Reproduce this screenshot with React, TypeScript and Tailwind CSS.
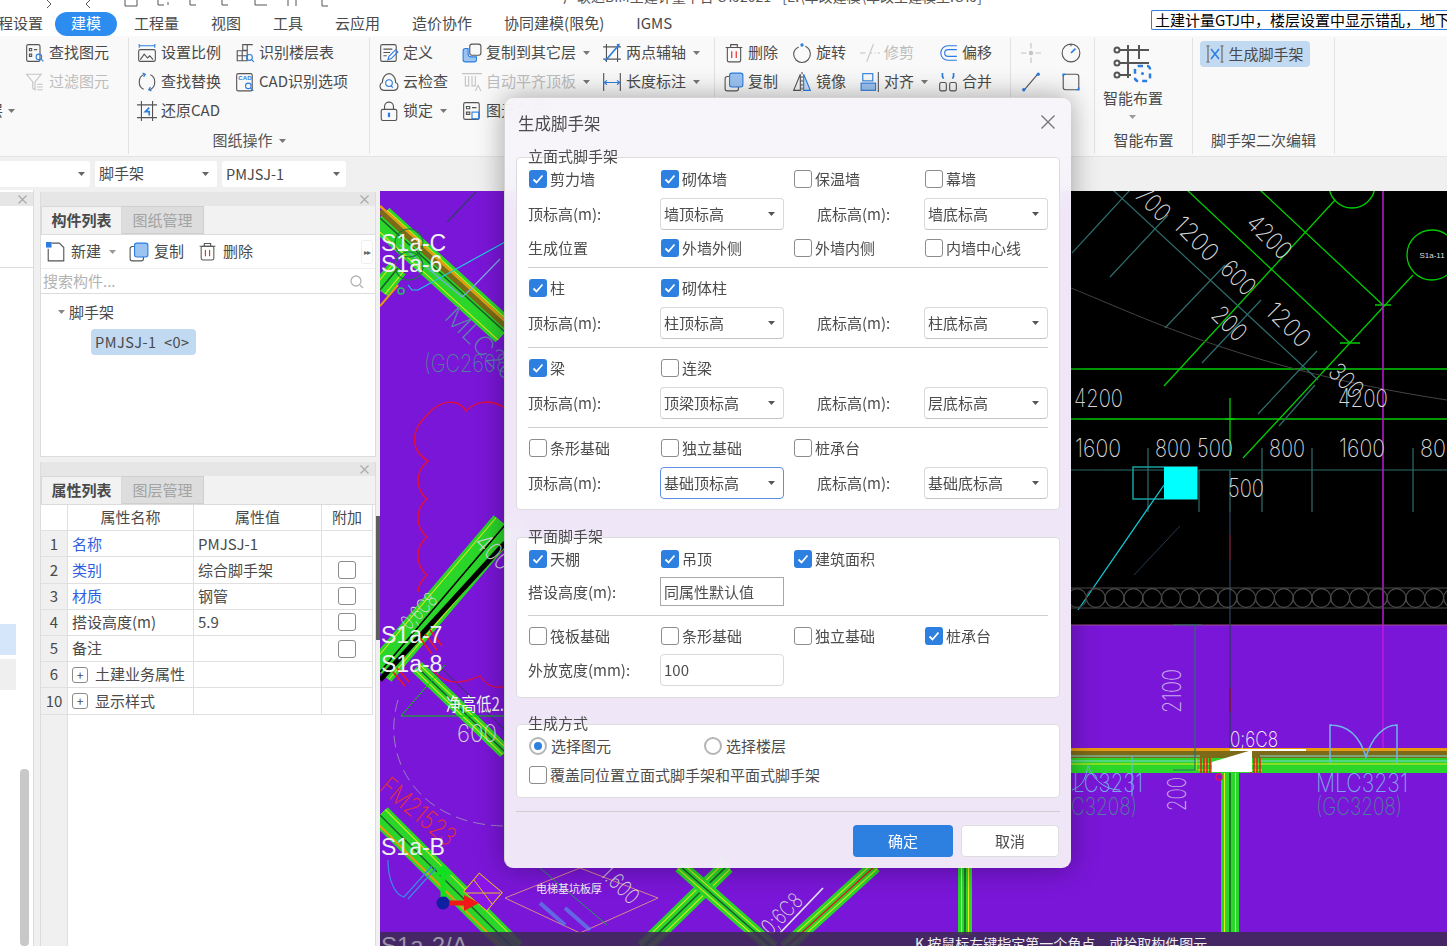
import { ReactNode } from 'react';

const font = '"Noto Sans CJK SC", "Noto Sans", sans-serif';

// ---- ribbon icons, all on an 18px box ----
const G = '#555555';
const B = '#2b7de0';
const L = '#c4c4c4';

function Ico({ children, size = 20 }: { children: ReactNode; size?: number }) {
  return (
    <svg width={size} height={size} viewBox="0 0 18 18" fill="none" stroke={G} strokeWidth="1" className="shrink-0">
      {children}
    </svg>
  );
}

const icons: Record<string, ReactNode> = {
  find: (
    <>
      <rect x="1.500" y="1.500" width="12" height="15" rx="1.500" />
      <path d="M4 5h2v2H4zM8 6h3M4 10h2v2H4z" />
      <circle cx="12.500" cy="12.500" r="2.500" stroke={B} />
      <path d="M14.500 14.500l2 2" stroke={B} />
    </>
  ),
  filter: (
    <g stroke={L}>
      <path d="M1.500 2h13L9 9v7l-2-1.500V9z" />
      <path d="M11 11h5M11 13.500h5M11 16h5" />
    </g>
  ),
  scale: (
    <>
      <path d="M2 2.500h14M2 .8v3.400M16 .8v3.400" stroke={B} />
      <rect x="1.500" y="6" width="15" height="10.500" rx="1.500" />
      <path d="M3 15l3.500-5 3 3.500 2-2 3 3.500" />
    </>
  ),
  floor: (
    <>
      <path d="M7 1.500h4v5H7zM11 1.500h5M2 7h9v9H2zM2 11.500h9M6.500 7v9" />
      <circle cx="13" cy="13" r="2.600" stroke={B} />
      <path d="M15 15l2 2" stroke={B} />
    </>
  ),
  replace: (
    <>
      <path d="M7 2C3.500 3 2 6 2 9s1.500 5.500 4 6.500" />
      <path d="M11 16c3.500-1 5-4 5-7s-1.500-5.500-4-6.500" />
      <path d="M5 1l2.500 1-1.500 2.500M13 17l-2.500-1 1.500-2.500" stroke={B} />
    </>
  ),
  cad: (
    <>
      <rect x="1.500" y="1.500" width="14" height="15.500" rx="1.500" />
      <text x="3" y="7.500" fontSize="5.500" fill={B} stroke="none" fontFamily="Liberation Sans" fontWeight="700">
        CAD
      </text>
      <circle cx="12" cy="12.500" r="2.500" stroke={B} />
      <path d="M14 14.500l2.500 2.500" stroke={B} />
    </>
  ),
  restore: (
    <>
      <path d="M4 0v18M14 0v18M0 3.500h18M0 15h18" />
      <path d="M11 6L7.500 9.500H11V13" stroke={B} strokeWidth="1.500" />
    </>
  ),
  define: (
    <>
      <rect x="1.500" y="1.500" width="14" height="15" rx="1.500" />
      <path d="M4 5.500h8M4 8.500h6M4 11.500h3" />
      <path d="M8 15l1-3 6-6 2 2-6 6z" stroke={B} />
    </>
  ),
  cloud: (
    <>
      <path d="M5 16.500c-5 0-5-6-2-7 0-5 3-8 6-8s6 3 6 8c3 1 3 7-2 7z" />
      <circle cx="9" cy="10" r="3" stroke={B} />
      <path d="M11 12.500l1.500 1.500" stroke={B} />
    </>
  ),
  lock: (
    <>
      <rect x="2" y="7.500" width="14" height="10" rx="1.500" />
      <path d="M5 7.500V5a4 4 0 018 0v2.500" />
      <rect x="8" y="10.500" width="2" height="4" fill={B} stroke="none" />
    </>
  ),
  copyLayer: (
    <>
      <rect x="7" y="1" width="10" height="10" rx="2" />
      <path d="M5.500 5H3a2 2 0 00-2 2v8a2 2 0 002 2h8a2 2 0 002-2v-2.500H8a2.500 2.500 0 01-2.500-2.500z" fill="#9cc4f2" stroke={B} />
    </>
  ),
  sheet: (
    <>
      <rect x="1.500" y="1.500" width="14" height="15" rx="1.500" />
      <path d="M4 5h3v2H4zM9 6h4M4 10h3v2H4z" />
      <rect x="9" y="10" width="6" height="6" stroke={B} />
    </>
  ),
  autoAlign: (
    <g stroke={L}>
      <path d="M0 1.500h18M3 3.500v9h3v-9M9 3.500v9h3v-9" />
      <path d="M12 17l2.500-5 2.500 5" />
    </g>
  ),
  twoPoint: (
    <>
      <path d="M4 1v16M14 1v16M1 3.500h16M1 14.500h16" />
      <path d="M3 16L15 2" stroke={B} strokeWidth="1.500" />
      <path d="M13 1.500l3-1-.5 3.500z" fill={B} stroke="none" />
    </>
  ),
  dim: (
    <>
      <path d="M1.500 1v16M16.500 1v16" />
      <path d="M2 9.500h14M4.500 7.500l-2.500 2 2.500 2M13.500 7.500l2.500 2-2.500 2" stroke={B} />
    </>
  ),
  trash: (
    <>
      <path d="M1.500 4h15M6 4V1.500h6V4" />
      <rect x="3" y="4" width="12" height="13" rx="1.500" />
      <path d="M7 7.500v6M11 7.500v6" stroke="#e02020" />
    </>
  ),
  rotate: (
    <>
      <path d="M6 3.500C3 5 1.500 7.500 1.500 10a7.500 7.500 0 0015 0c0-3-1.500-5.500-4.500-7" />
      <circle cx="9" cy="1.800" r="1.500" fill={B} stroke="none" />
    </>
  ),
  trim: (
    <g stroke={L}>
      <path d="M6 17L12 1" />
      <path d="M0 9h5M9 9h2M13 9h1M16 9h2" />
    </g>
  ),
  offset: (
    <g stroke={B}>
      <path d="M17 2.500H9a6.500 6.500 0 000 13h8" />
      <path d="M17 6H9a3 3 0 000 6h8" />
    </g>
  ),
  copy: (
    <>
      <path d="M5 4H3a2 2 0 00-2 2v9a2 2 0 002 2h8a2 2 0 002-2v-1.500" />
      <rect x="5" y="1" width="12" height="12.500" rx="2" fill="#9cc4f2" stroke={B} />
    </>
  ),
  mirror: (
    <>
      <path d="M7.500 2L1.500 16.500h6z" />
      <path d="M10.500 2l6 14.500h-6z" fill="#c9dff8" stroke={B} />
      <path d="M9 0v18" strokeDasharray="2 1.500" />
    </>
  ),
  align: (
    <>
      <rect x="2.500" y="1.500" width="9" height="6.500" stroke={B} />
      <rect x="1" y="10" width="13" height="6.500" fill="#9cc4f2" stroke={B} />
      <path d="M16.500 0v18" />
    </>
  ),
  merge: (
    <>
      <rect x="1.500" y="9.500" width="6" height="7.500" rx="1.500" />
      <rect x="10.500" y="9.500" width="6" height="7.500" rx="1.500" />
      <path d="M4 1v3l1 2M14 1v3l-1 2" stroke={B} strokeWidth="1.500" />
    </>
  ),
  point: (
    <g stroke={L}>
      <path d="M9 0v5M9 13v5M0 9h5M13 9h5" />
      <circle cx="9" cy="9" r="1.500" fill={L} />
    </g>
  ),
  gauge: (
    <>
      <circle cx="9" cy="9" r="8" />
      <path d="M9 9l4-4" stroke={B} strokeWidth="1.500" />
      <path d="M9 1v2" />
    </>
  ),
  line: (
    <>
      <path d="M3 16L15 2" />
      <circle cx="2.500" cy="16" r="1.500" fill={B} stroke="none" />
      <circle cx="15.500" cy="2" r="1.500" fill={B} stroke="none" />
    </>
  ),
  box: (
    <>
      <rect x="2" y="2" width="14" height="14" rx="2" />
      <path d="M2 4V2h2M14 16h2v-2" stroke={B} strokeWidth="1.500" />
    </>
  ),
  scaffold: (
    <>
      <path d="M2 1v16M16 1v16M.5 1h3M.5 17h3M14.500 1h3M14.500 17h3" stroke="#7f7f7f" strokeWidth="1.500" />
      <path d="M5 4l8 10M13 4L5 14" stroke={B} strokeWidth="1.500" />
    </>
  ),
};

function Tool({ icon, label, off, drop }: { icon: string; label: string; off?: boolean; drop?: boolean }) {
  return (
    <div className={`flex items-center h-[29px] gap-[4px] whitespace-nowrap ${off ? 'text-[#bdbdbd]' : 'text-[#4a4a4a]'}`}>
      <Ico>{icons[icon]}</Ico>
      <span>{label}</span>
      {drop && <Tri className="ml-[3px]" />}
    </div>
  );
}

function Tri({ className = '', color = '#777' }: { className?: string; color?: string }) {
  return (
    <svg width="7" height="4" viewBox="0 0 7 4" className={`shrink-0 ${className}`}>
      <path d="M0 0h7L3.500 4z" fill={color} />
    </svg>
  );
}

function Check({ on, label }: { on?: boolean; label?: string }) {
  return (
    <div className="flex items-center h-[20px] gap-[3px] pl-[1px] whitespace-nowrap">
      {on ? (
        <span className="w-[18px] h-[18px] rounded-[3px] bg-[#2d7fe0] flex items-center justify-center shrink-0">
          <svg width="14" height="14" viewBox="0 0 14 14" fill="none" stroke="#fff" strokeWidth="1.800">
            <path d="M2.500 7.500l3 3 6-7" />
          </svg>
        </span>
      ) : (
        <span className="w-[18px] h-[18px] rounded-[3px] bg-white border border-[#8c8c8c] shrink-0" />
      )}
      {label && <span>{label}</span>}
    </div>
  );
}

function Select({ value, focus }: { value: string; focus?: boolean }) {
  return (
    <div
      className={`w-[124px] h-[32px] bg-white rounded-[4px] border flex items-center justify-between pl-[3px] pr-[8px] ${
        focus ? 'border-[#5d8fe6]' : 'border-[#d9d9d9] border-b-[#c4c4c4]'
      }`}
    >
      <span>{value}</span>
      <Tri color="#555" />
    </div>
  );
}

const dialogCols = 'grid grid-cols-[132px_133px_131px_124px] items-center';

function CheckRow({ items, className = '' }: { items: ([string, boolean] | null)[]; className?: string }) {
  return (
    <div className={`${dialogCols} ${className}`}>
      {items.map((it, i) => (it ? <Check key={i} label={it[0]} on={it[1]} /> : <span key={i} />))}
    </div>
  );
}

function LevelRow({ top, bottom, focus }: { top: string; bottom: string; focus?: boolean }) {
  return (
    <div className={`${dialogCols} mt-[9px]`}>
      <span>顶标高(m):</span>
      <Select value={top} focus={focus} />
      <span className="pl-[24px]">底标高(m):</span>
      <Select value={bottom} />
    </div>
  );
}

function GroupBox({ title, className, children }: { title: string; className: string; children: ReactNode }) {
  return (
    <div className={`relative bg-white rounded-[4px] border border-[#dcdcdc] px-[11px] pt-[11px] ${className}`}>
      <span className="absolute left-[11px] -top-[12px] leading-[20px]">{title}</span>
      {children}
    </div>
  );
}

function Rule({ className = '' }: { className?: string }) {
  return <div className={`h-px bg-[#cfcfcf] ${className}`} />;
}

function Radio({ on, label, className = '' }: { on?: boolean; label: string; className?: string }) {
  return (
    <div className={`flex items-center gap-[4px] ${className}`}>
      <span className="w-[18px] h-[18px] rounded-full border-2 border-[#b5b5b5] bg-white flex items-center justify-center shrink-0">
        {on && <span className="w-[8px] h-[8px] rounded-full bg-[#2d7fe0]" />}
      </span>
      <span>{label}</span>
    </div>
  );
}

function Dialog() {
  return (
    <div
      className="absolute left-[504px] top-[97px] w-[567px] h-[771px] rounded-[9px] bg-[#f7f4fa]/[0.94] backdrop-blur-md shadow-[0_0_28px_rgba(0,0,0,0.35)] border border-[#d4d4d4] border-b-0 border-r-0 px-[11px] text-[15px] leading-[20px] text-[#4c4c4c]"
    >
      <div className="h-[59px] flex items-start justify-between pt-[13px] pl-[2px] pr-[2px]">
        <span className="text-[16.500px] leading-[24px]">生成脚手架</span>
        <svg width="16" height="16" viewBox="0 0 16 16" stroke="#777" strokeWidth="1.400" className="mt-[3px] mr-[2px]">
          <path d="M1.500 1.500l13 13M14.500 1.500l-13 13" />
        </svg>
      </div>

      <GroupBox title="立面式脚手架" className="h-[353px]">
        <CheckRow items={[['剪力墙', true], ['砌体墙', true], ['保温墙', false], ['幕墙', false]]} />
        <LevelRow top="墙顶标高" bottom="墙底标高" />
        <div className={`${dialogCols} mt-[8px]`}>
          <span>生成位置</span>
          <Check label="外墙外侧" on />
          <Check label="外墙内侧" />
          <Check label="内墙中心线" />
        </div>
        <Rule className="mt-[9px]" />
        <CheckRow className="mt-[10px]" items={[['柱', true], ['砌体柱', true]]} />
        <LevelRow top="柱顶标高" bottom="柱底标高" />
        <Rule className="mt-[8px]" />
        <CheckRow className="mt-[10px]" items={[['梁', true], ['连梁', false]]} />
        <LevelRow top="顶梁顶标高" bottom="层底标高" />
        <Rule className="mt-[8px]" />
        <CheckRow className="mt-[10px]" items={[['条形基础', false], ['独立基础', false], ['桩承台', false]]} />
        <LevelRow top="基础顶标高" bottom="基础底标高" focus />
      </GroupBox>

      <GroupBox title="平面脚手架" className="h-[161px] mt-[27px]">
        <CheckRow items={[['天棚', true], ['吊顶', true], ['建筑面积', true]]} />
        <div className={`${dialogCols} mt-[8px]`}>
          <span>搭设高度(m):</span>
          <div className="w-[124px] h-[29px] bg-white border border-[#a8a8a8] flex items-center pl-[3px]">同属性默认值</div>
        </div>
        <Rule className="mt-[9px]" />
        <CheckRow className="mt-[10px]" items={[['筏板基础', false], ['条形基础', false], ['独立基础', false], ['桩承台', true]]} />
        <div className={`${dialogCols} mt-[8px]`}>
          <span>外放宽度(mm):</span>
          <div className="w-[124px] h-[32px] bg-white rounded-[4px] border border-[#d9d9d9] flex items-center pl-[3px]">100</div>
        </div>
      </GroupBox>

      <GroupBox title="生成方式" className="h-[74px] mt-[26px]">
        <div className="flex items-center h-[20px] pl-[1px]">
          <Radio on label="选择图元" className="w-[175px]" />
          <Radio label="选择楼层" />
        </div>
        <div className="mt-[9px]">
          <Check label="覆盖同位置立面式脚手架和平面式脚手架" />
        </div>
      </GroupBox>

      <Rule className="mt-[13px]" />
      <div className="flex justify-end gap-[8px] mt-[13px] pr-[1px]">
        <button className="w-[100px] h-[32px] rounded-[4px] bg-[#2d7fe0] text-white">确定</button>
        <button className="w-[98px] h-[32px] rounded-[4px] bg-white border border-[#dedede]">取消</button>
      </div>
    </div>
  );
}

// ---- drawing area ----
function Wall({ x1, y1, x2, y2, w, core = '#1c5a2c' }: { x1: number; y1: number; x2: number; y2: number; w: number; core?: string }) {
  const p = { x1, y1, x2, y2 };
  return (
    <>
      <line {...p} stroke="#2ad62a" strokeWidth={w} />
      <line {...p} stroke="#e8e81e" strokeWidth={w - 6} />
      <line {...p} stroke="#2ad62a" strokeWidth={w - 8} />
      <line {...p} stroke={core} strokeWidth="1.500" />
    </>
  );
}

function Dim({ x, y, t, w, s = 25, r, fill = '#d8d8d8' }: { x: number; y: number; t: string; w: number; s?: number; r?: number; fill?: string }) {
  return (
    <text
      x={x}
      y={y}
      fontSize={s}
      textLength={w}
      lengthAdjust="spacingAndGlyphs"
      fill={fill}
      fontFamily="Inter, Roboto, sans-serif"
      fontWeight="200"
      textAnchor={r === undefined ? 'start' : 'middle'}
      dominantBaseline={r === undefined ? 'auto' : 'middle'}
      transform={r === undefined ? undefined : `rotate(${r} ${x} ${y})`}
    >
      {t}
    </text>
  );
}

function Canvas() {
  const teal = '#2f6d6d';
  const green = '#00cc00';
  const scallops = Array.from({ length: 21 }, (_, i) => 1077 + i * 18.800);
  return (
    <svg viewBox="380 191 1067 755" width="1067" height="755" className="block mt-[1px]">
      <rect x="380" y="191" width="1067" height="755" fill="#7a16d8" />
      <rect x="1071" y="191" width="376" height="434" fill="#000" />
      <line x1="1071" y1="625" x2="1447" y2="625" stroke="#a0508c" />

      {/* upper right grid lines */}
      <g stroke={green} strokeWidth="1.300" fill="none">
        <path d="M1187 190L1350 343M1260 190L1383 305M1164 386L1335 200M1243 458L1413 275" />
        <path d="M1071 369H1447M1071 419H1447M1230 398V456" />
        <circle cx="1352" cy="185" r="23" />
        <circle cx="1432" cy="255" r="25" />
        <path d="M1340 343h20M1375 305h16M1225 419h10" />
      </g>
      <path d="M1071 288C1150 320 1250 370 1447 400" stroke="#444" fill="none" />
      <g stroke={teal} strokeWidth="1.200" fill="none">
        <path d="M1113 190L1318 380" />
        <path d="M1072 253L1130 190M1110 277L1168 215M1165 328L1225 265M1202 363L1261 300M1258 414L1317 351M1279 426L1315 385" />
        <path d="M1071 470H1447M1148 448V512M1199 470V512M1230 470V512M1262 448V512M1312 448V512M1413 448V512" />
        <rect x="1133" y="467" width="64" height="32" stroke="#18a0a0" strokeWidth="1.500" />
      </g>
      <rect x="1164" y="467" width="33" height="32" fill="#00ffff" />
      <line x1="1164" y1="485" x2="1078" y2="610" stroke="#12c8d8" strokeWidth="1.300" />
      <line x1="1134" y1="575" x2="1180" y2="526" stroke="#25394d" />
      <line x1="1230" y1="512" x2="1230" y2="772" stroke="#2c3f58" strokeWidth="1.300" />
      <line x1="1230" y1="535" x2="1230" y2="560" stroke="#6b1020" strokeWidth="1.300" />
      <line x1="1230" y1="688" x2="1230" y2="712" stroke="#8a1030" strokeWidth="1.300" />
      <line x1="1383" y1="191" x2="1383" y2="762" stroke="#c018d8" strokeWidth="1.500" />
      <g stroke="#4c4c4c" fill="none" strokeWidth="1.200">
        <path d="M1071 588H1447M1071 608H1447" />
        {scallops.map((x) => (
          <circle key={x} cx={x} cy="598" r="9.400" />
        ))}
      </g>
      <Dim x={1074} y={407} t="4200" w={49} />
      <Dim x={1338} y={407} t="4200" w={50} />
      <Dim x={1075} y={457} t="1600" w={46} />
      <Dim x={1155} y={457} t="800" w={36} />
      <Dim x={1197} y={457} t="500" w={36} />
      <Dim x={1269} y={457} t="800" w={36} />
      <Dim x={1339} y={457} t="1600" w={46} />
      <Dim x={1420} y={457} t="80" w={26} />
      <Dim x={1228} y={497} t="500" w={36} />
      <Dim x={1152} y={205} t="700" w={38} r={45} />
      <Dim x={1195} y={240} t="1200" w={52} r={45} />
      <Dim x={1268} y={238} t="4200" w={52} r={45} />
      <Dim x={1237} y={279} t="600" w={38} r={45} />
      <Dim x={1228} y={325} t="200" w={38} r={45} />
      <Dim x={1287} y={326} t="1200" w={52} r={45} />
      <Dim x={1345} y={382} t="300" w={38} r={45} />
      <text x="1432" y="258" fontSize="8" fill="#ddd" textAnchor="middle" fontFamily="Liberation Sans">S1a-11</text>

      {/* lower right walls */}
      <rect x="1071" y="748" width="376" height="3" fill="#e89a10" />
      <rect x="1071" y="751" width="376" height="7" fill="#7c6a18" />
      <rect x="1071" y="758" width="376" height="15" fill="#2ad62a" />
      <path d="M1071 764H1447" stroke="#e8e81e" />
      <path d="M1071 756H1200M1260 756H1447M1071 761H1200M1260 761H1447" stroke="#7fd8d8" />
      <Wall x1={1230} y1={773} x2={1230} y2={932} w={18} />
      <path d="M1196 758V770M1198 770H1262" stroke="#e8e81e" />
      <g stroke="#f01818" strokeWidth="1.500">
        <path d="M1201 758v15M1204 758v15M1207 758v15M1210 758v15M1251 758v15M1254 758v15M1257 758v15M1260 758v15" />
      </g>
      <path d="M1212 762L1252 750V772H1212z" fill="#fff" />
      <path d="M1230 750H1306" stroke="#fff" strokeWidth="2" />
      <circle cx="1219" cy="777" r="3" fill="none" stroke="#e01060" strokeWidth="1.500" />
      <path d="M1195 625V770M1173 625H1202M1173 770H1195" stroke="#2f6d6d" strokeWidth="1.200" />
      <path d="M1330 763V725c18 0 30 12 36 32 6-20 18-32 31-32v38M1330 725h2M1397 725h-2" fill="none" stroke="#6fb6ea" strokeWidth="1.500" />
      <path d="M1072 790c12-4 14-14 16-24 4 10 14 24 32 24M1132 756v40" fill="none" stroke="#6fb6ea" />
      <Dim x={1316} y={792} t="MLC3231" w={92} s={26} fill="#7da6ee" />
      <Dim x={1316} y={815} t="(GC3208)" w={86} s={24} fill="#4f7f9e" />
      <Dim x={1073} y={792} t="LC3231" w={70} s={26} fill="#7da6ee" />
      <Dim x={1071} y={815} t="C3208)" w={66} s={24} fill="#4f7f9e" />
      <Dim x={1174} y={691} t="2100" w={44} s={26} r={-90} fill="#c8a8ec" />
      <Dim x={1179} y={794} t="200" w={34} s={26} r={-90} fill="#c8a8ec" />
      <Dim x={1230} y={747} t="0;6C8" w={48} s={22} fill="#f4f4f4" />

      {/* upper left */}
      <path d="M447 222L476 192" stroke="#3a3a70" strokeWidth="1.500" />
      <Wall x1={380} y1={218} x2={505} y2={332} w={28} />
      <line x1="380" y1="206" x2="505" y2="321" stroke="#e89a10" strokeWidth="2.500" />
      <line x1="380" y1="211" x2="505" y2="326" stroke="#7c6a18" strokeWidth="5" />
      <Wall x1={380} y1={290} x2={398} y2={268} w={20} />
      <line x1="380" y1="306" x2="398" y2="285" stroke="#e89a10" strokeWidth="2" />
      <g fill="none" strokeWidth="1.200">
        <path d="M505 242L418 290H412L408 285" stroke="#1ccce0" />
        <path d="M500 259L470 290L462 297L400 245" stroke="#7fa8e8" />
        <circle cx="409" cy="243" r="14" stroke="#1a7a3a" />
        <circle cx="409" cy="266" r="14" stroke="#1a7a3a" />
        <circle cx="401" cy="291" r="3" stroke="#24c060" strokeWidth="1.500" />
      </g>
      <text x="381" y="251" fontSize="23" fill="#f0f0f0" fontFamily="Liberation Sans">S1a-C</text>
      <text x="381" y="272" fontSize="23" fill="#f0f0f0" fontFamily="Liberation Sans">S1a-6</text>
      <Dim x={480} y={345} t="MLC26" w={90} s={26} r={45} fill="#5b87a8" />
      <Dim x={424} y={372} t="(GC2608" w={84} s={24} fill="#4f7f9e" />
      <path
        d="M505 408C490 398 474 402 466 411C458 398 440 400 428 414C410 430 410 450 428 461C414 472 416 490 427 499C414 510 416 528 427 537C414 548 416 566 427 575C420 582 418 588 418 592"
        fill="none"
        stroke="#e0103c"
        strokeWidth="1.500"
      />

      {/* lower left */}
      <Wall x1={505} y1={525} x2={380} y2={672} w={30} core="#000" />
      <line x1="505" y1="543" x2="380" y2="680" stroke="#000" strokeWidth="5" />
      <Dim x={492} y={553} t="400" w={40} s={25} r={45} />
      <Dim x={420} y={612} t="0;6C8" w={42} s={20} r={-45} />
      <Wall x1={417} y1={667} x2={505} y2={752} w={14} />
      <path d="M438 665L505 730" stroke="#2a3a50" fill="none" />
      <path d="M401 716H505M401 716L445 665" stroke={green} fill="none" />
      <path d="M432 670C450 690 470 680 480 676C490 690 500 688 505 686" stroke="#e0103c" fill="none" strokeWidth="1.200" />
      <g stroke="#f01818" strokeWidth="1.500">
        <path d="M420 638l12 16M425 634l12 16M430 630l12 16M393 672l12 14M397 668l12 14" />
      </g>
      <text x="381" y="643" fontSize="23" fill="#f0f0f0" fontFamily="Liberation Sans">S1a-7</text>
      <text x="381" y="672" fontSize="23" fill="#f0f0f0" fontFamily="Liberation Sans">S1a-8</text>
      <text x="446" y="711" fontSize="18" textLength="58" lengthAdjust="spacingAndGlyphs" fill="#f4f4f4" fontFamily="Noto Sans CJK SC">净高低2.</text>
      <Dim x={457} y={742} t="600" w={40} s={25} />
      <path d="M398 700C380 760 420 825 505 826" stroke="#9a7ec0" strokeDasharray="12 6" fill="none" />
      <Wall x1={380} y1={815} x2={515} y2={950} w={22} />
      <line x1="380" y1="826" x2="505" y2="950" stroke="#e89a10" strokeWidth="2" />
      <Dim x={417} y={813} t="FM21523" w={90} s={26} r={40} fill="#e83030" />
      <text x="381" y="855" fontSize="23" fill="#f0f0f0" fontFamily="Liberation Sans">S1a-B</text>
      <path d="M388 860C388 880 395 895 404 897L432 866M408 899L436 868" stroke="#3a88e8" fill="none" strokeWidth="1.200" />
      <path d="M505 898L580 868M505 898L580 933L658 898L580 868" stroke="#d88a8a" fill="none" />
      <rect x="468" y="880" width="30" height="24" fill="#8a14ea" stroke="#e0c020" transform="rotate(40 483 892)" />
      <path d="M474 880L492 904M466 893L500 893" stroke="#e0c020" />
      <path d="M540 903L565 925M565 908L590 930" stroke="#5a8ae8" strokeWidth="4" fill="none" opacity=".7" />
      <path d="M540 868L607 925" stroke="#1ca050" fill="none" />
      <text x="536" y="893" fontSize="11" fill="#f0f0f0" fontFamily="Noto Sans CJK SC">电梯基坑板厚</text>
      <Dim x={619} y={886} t="1.600" w={44} s={22} r={45} />
      <path d="M443 903V872" stroke="#10e020" strokeWidth="5" />
      <path d="M434 875l9-10 9 10z" fill="#10e020" />
      <path d="M443 903H466" stroke="#f01818" strokeWidth="5" />
      <path d="M464 895l15 8-15 8z" fill="#f01818" />
      <circle cx="443" cy="903" r="6.500" fill="#1020a0" />
      <Wall x1={727} y1={866} x2={643} y2={948} w={16} />
      <Wall x1={680} y1={866} x2={773} y2={948} w={14} />
      <Wall x1={875} y1={866} x2={785} y2={948} w={14} core="#e02020" />
      <Wall x1={965} y1={866} x2={965} y2={935} w={14} />
      <path d="M823 888L780 933" stroke="#e0e0f0" strokeWidth="1.800" />
      <Dim x={783} y={915} t="0;6C8" w={48} s={22} r={-45} />

      {/* command hint bar */}
      <rect x="380" y="932" width="1067" height="14" fill="#3d2a55" opacity=".88" />
      <text x="381" y="954" fontSize="24" fill="#9c94a8" fontFamily="Liberation Sans">S1a-2/A</text>
      <text x="915" y="949" fontSize="14" fill="#eee" fontFamily="Noto Sans CJK SC">K 按鼠标左键指定第一个角点，或拾取构件图元</text>
    </svg>
  );
}

// ---- side panels ----
function PanelHead() {
  return (
    <div className="h-[14px] bg-[#e6e6e6] flex items-center justify-end pr-[6px]">
      <svg width="9" height="9" viewBox="0 0 9 9" stroke="#aaa" strokeWidth="1.200">
        <path d="M.5 .5l8 8M8.500 .5l-8 8" />
      </svg>
    </div>
  );
}

function Tabs({ a, b }: { a: string; b: string }) {
  return (
    <div className="h-[29px] flex bg-[#f2f2f2] border-b border-[#dcdcdc]">
      <div className="w-[81px] flex items-center justify-center font-bold text-[#4a4a4a] border border-[#d8d8d8] border-b-0">{a}</div>
      <div className="w-[82px] flex items-center justify-center text-[#a3a3a3] bg-[#dddddd] border border-l-0 border-[#cfcfcf]">{b}</div>
    </div>
  );
}

const rows: [string, string, string, boolean, boolean][] = [
  ['1', '名称', 'PMJSJ-1', true, false],
  ['2', '类别', '综合脚手架', true, true],
  ['3', '材质', '钢管', true, true],
  ['4', '搭设高度(m)', '5.9', false, true],
  ['5', '备注', '', false, true],
];

function Plus() {
  return (
    <span className="w-[16px] h-[16px] rounded-[3px] border border-[#8c8c8c] flex items-center justify-center shrink-0 text-[12px] leading-none mr-[7px]">+</span>
  );
}

function PropTable() {
  const cell = 'border-r border-b border-[#e0e0e0] flex items-center';
  const grid = 'grid grid-cols-[27px_126px_128px_51px] h-[26.200px]';
  return (
    <div className="flex-1 relative bg-white w-[332px]">
      <div className="absolute left-0 top-0 bottom-0 w-[27px] bg-[#f0f0f0] border-r border-[#e0e0e0]" />
      <div className="relative">
        <div className={grid}>
          <div className={`${cell} bg-white`} />
          <div className={`${cell} justify-center`}>属性名称</div>
          <div className={`${cell} justify-center`}>属性值</div>
          <div className={`${cell} justify-center`}>附加</div>
        </div>
        {rows.map(([n, name, val, link, box]) => (
          <div key={n} className={grid}>
            <div className={`${cell} justify-center bg-[#f0f0f0]`}>{n}</div>
            <div className={`${cell} pl-[4px] ${link ? 'text-[#2f5fe0]' : ''}`}>{name}</div>
            <div className={`${cell} pl-[4px]`}>{val}</div>
            <div className={`${cell} justify-center`}>
              {box && <span className="w-[18px] h-[18px] rounded-[3px] border border-[#8c8c8c]" />}
            </div>
          </div>
        ))}
        {[
          ['6', '土建业务属性'],
          ['10', '显示样式'],
        ].map(([n, name]) => (
          <div key={n} className={grid}>
            <div className={`${cell} justify-center bg-[#f0f0f0]`}>{n}</div>
            <div className={`${cell} pl-[4px]`}>
              <Plus />
              {name}
            </div>
            <div className={cell} />
            <div className={cell} />
          </div>
        ))}
      </div>
    </div>
  );
}

function SidePanels() {
  return (
    <div className="w-[336px] flex flex-col gap-[5px] pt-[2px] text-[15px] text-[#4a4a4a]">
      <div className="h-[265px] flex flex-col bg-white border-x border-b border-[#dcdcdc]">
        <PanelHead />
        <Tabs a="构件列表" b="图纸管理" />
        <div className="h-[34px] flex items-center pl-[5px] pr-[2px] border-b border-[#eeeeee]">
          <Ico size={20}>
            <path d="M2 6v11h14V5l-4-4H5" />
            <rect x="0" y="0" width="5" height="5" fill={B} stroke="none" />
          </Ico>
          <span className="ml-[5px]">新建</span>
          <Tri className="ml-[8px]" color="#999" />
          <span className="ml-[13px] flex"><Ico size={20}>{icons.copy}</Ico></span>
          <span className="ml-[5px]">复制</span>
          <span className="ml-[14px] flex"><Ico size={19}>{icons.trash}</Ico></span>
          <span className="ml-[6px]">删除</span>
          <span className="ml-auto w-[12px] h-[24px] rounded-[3px] border border-[#eeeeee] flex items-center justify-center text-[8px] text-[#666] tracking-[-1px]">▸▸</span>
        </div>
        <div className="h-[24px] flex items-center justify-between pl-[2px] pr-[11px] border-b border-[#dcdcdc] text-[#b3b3b3] mt-[1px]">
          <span>搜索构件...</span>
          <svg width="14" height="14" viewBox="0 0 14 14" fill="none" stroke="#b3b3b3" strokeWidth="1.300">
            <circle cx="6" cy="6" r="5" />
            <path d="M10 10l3 3" />
          </svg>
        </div>
        <div className="pl-[17px] pt-[6px]">
          <div className="flex items-center h-[24px] gap-[4px]">
            <Tri color="#888" />
            <span>脚手架</span>
          </div>
          <div className="ml-[33px] mt-[5px] w-[105px] h-[26px] rounded-[4px] bg-[#c2d9f2] flex items-center pl-[4px] whitespace-pre tracking-[0.500px] text-[14.500px]">
            PMJSJ-1  {'<0>'}
          </div>
        </div>
      </div>
      <div className="flex-1 flex flex-col bg-white border-x border-[#dcdcdc]">
        <PanelHead />
        <Tabs a="属性列表" b="图层管理" />
        <PropTable />
      </div>
    </div>
  );
}

function LeftStrip() {
  return (
    <div className="w-[34px] relative pt-[2px] flex flex-col bg-white border-r border-[#dcdcdc]">
      <PanelHead />
      <div className="h-[62px] border-b border-[#dcdcdc]" />
      <div className="w-[16px] h-[31px] bg-[#d5e6fb] mt-[356px]" />
      <div className="w-[16px] h-[31px] bg-[#efefef] mt-[4px]" />
      <div className="absolute left-[20px] top-[579px] bottom-0 w-[9px] rounded-[4px] bg-[#c8c8c8]" />
    </div>
  );
}

export default function App() {
  return (
    <div className="relative w-[1447px] h-[946px] overflow-hidden bg-[#f0f0f0]" style={{ fontFamily: font }}>
      {/* clipped title bar */}
      <div className="h-[8px] bg-white overflow-hidden relative flex justify-start">
        <svg width="360" height="8" viewBox="0 0 360 8" fill="none" stroke="#555" className="shrink-0">
          <path d="M47 0l4 4-4 4M90 0l-4 4 4 4M125 0v6h12V0M158 0v5h6M168 2v3M190 0v5h6M222 0v5h6M255 0v5h12M288 0v6M296 0v6M322 0v6h6" />
        </svg>
        <span className="ml-[203px] -mt-[14px] text-[14px] text-[#555] whitespace-nowrap">广联达BIM土建计量平台 GTJ2021 - [E:\车改建模\车改土建模型.GTJ]</span>
      </div>

      {/* menu */}
      <div className="h-[28px] bg-white flex items-center text-[15px] text-[#4a4a4a] pr-0">
        <span className="whitespace-nowrap -ml-[2px] w-[57px] mt-[2px]">程设置</span>
        <span className="w-[62px] h-[24px] mt-[3px] rounded-full bg-[#2d8cf0] text-white flex items-center justify-center">建模</span>
        <div className="flex items-center gap-[32px] ml-[17px] whitespace-nowrap mt-[2px]">
          <span>工程量</span>
          <span>视图</span>
          <span>工具</span>
          <span>云应用</span>
          <span>造价协作</span>
          <span>协同建模(限免)</span>
          <span>IGMS</span>
        </div>
        <div className="ml-auto w-[296px] h-[20px] mt-[-4px] border border-[#2d7fe0] border-r-0 rounded-l-[2px] bg-white text-black text-[15px] leading-[18px] pl-[3px] whitespace-nowrap overflow-hidden">
          土建计量GTJ中，楼层设置中显示错乱，地下
        </div>
      </div>

      {/* ribbon */}
      <div className="h-[121px] bg-[#f9f9f9] flex text-[15px] text-[#4a4a4a] py-[2px] border-b border-[#e4e4e4]">
        <div className="w-[129px] border-r border-[#e2e2e2] pl-[24px] relative">
          <div className="pl-[1px]">
            <Tool icon="find" label="查找图元" />
            <Tool icon="filter" label="过滤图元" off />
          </div>
          <div className="flex items-center h-[29px] -ml-[24px] gap-[5px]">
            <span className="-ml-[12px]">层</span>
            <Tri />
          </div>
        </div>
        <div className="w-[241px] border-r border-[#e2e2e2] pl-[8px] flex flex-col justify-between">
          <div className="flex">
            <div className="w-[98px]">
              <Tool icon="scale" label="设置比例" />
              <Tool icon="replace" label="查找替换" />
              <Tool icon="restore" label="还原CAD" />
            </div>
            <div>
              <Tool icon="floor" label="识别楼层表" />
              <Tool icon="cad" label="CAD识别选项" />
            </div>
          </div>
          <div className="h-[27px] flex items-center justify-center gap-[6px] pr-[8px] text-[#555]">
            图纸操作 <Tri />
          </div>
        </div>
        <div className="w-[345px] border-r border-[#e2e2e2] pl-[9px] flex">
          <div className="w-[83px]">
            <Tool icon="define" label="定义" />
            <Tool icon="cloud" label="云检查" />
            <Tool icon="lock" label="锁定" drop />
          </div>
          <div className="w-[140px]">
            <Tool icon="copyLayer" label="复制到其它层" drop />
            <Tool icon="autoAlign" label="自动平齐顶板" off drop />
            <Tool icon="sheet" label="图元存盘" />
          </div>
          <div>
            <Tool icon="twoPoint" label="两点辅轴" drop />
            <Tool icon="dim" label="长度标注" drop />
          </div>
        </div>
        <div className="w-[296px] border-r border-[#e2e2e2] pl-[9px] flex">
          <div className="w-[68px]">
            <Tool icon="trash" label="删除" />
            <Tool icon="copy" label="复制" />
          </div>
          <div className="w-[68px]">
            <Tool icon="rotate" label="旋转" />
            <Tool icon="mirror" label="镜像" />
          </div>
          <div className="w-[78px]">
            <Tool icon="trim" label="修剪" off />
            <Tool icon="align" label="对齐" drop />
          </div>
          <div>
            <Tool icon="offset" label="偏移" />
            <Tool icon="merge" label="合并" />
          </div>
        </div>
        <div className="w-[84px] border-r border-[#e2e2e2] pl-[10px] grid grid-cols-[40px_1fr] auto-rows-[29px] items-center">
          <Ico>{icons.point}</Ico>
          <Ico>{icons.gauge}</Ico>
          <Ico>{icons.line}</Ico>
          <Ico>{icons.box}</Ico>
        </div>
        <div className="w-[98px] border-r border-[#e2e2e2] flex flex-col items-center">
          <div className="flex flex-col items-center pr-[21px]">
            <svg width="40" height="40" viewBox="0 0 40 40" fill="none" stroke={G} strokeWidth="2" className="mt-[5px]">
              <path d="M4 7h32M4 20h32M4 32h14M15 2v33M26 2v14" />
              <circle cx="4" cy="7" r="2.500" fill="#fff" />
              <circle cx="4" cy="20" r="2.500" fill="#fff" />
              <circle cx="4" cy="32" r="2.500" fill="#fff" />
              <rect x="22" y="23" width="15" height="15" rx="3" stroke={B} strokeWidth="2.500" strokeDasharray="5 4" />
              <circle cx="29.500" cy="30.500" r="1.500" fill={B} stroke="none" />
            </svg>
            <span className="mt-[5px] leading-[20px]">智能布置</span>
            <Tri className="mt-[7px]" color="#999" />
          </div>
          <span className="mt-auto h-[27px] flex items-center">智能布置</span>
        </div>
        <div className="w-[142px] border-r border-[#e2e2e2] flex flex-col items-center">
          <div className="self-start ml-[7px] mt-[3px] w-[110px] h-[26px] rounded-[4px] bg-[#c2d9f2] flex items-center justify-center gap-[4px]">
            <Ico size={18}>{icons.scaffold}</Ico>
            生成脚手架
          </div>
          <span className="mt-auto h-[27px] flex items-center">脚手架二次编辑</span>
        </div>
      </div>

      {/* selector row */}
      <div className="h-[33px] bg-[#f0f0f0] flex items-center gap-[5px] text-[15px] text-[#4a4a4a]">
        <div className="-ml-[2px] w-[92px] h-[26px] bg-white rounded-[3px] flex items-center justify-end pr-[5px]">
          <Tri color="#666" />
        </div>
        <div className="w-[122px] h-[26px] bg-white rounded-[3px] flex items-center justify-between pl-[4px] pr-[8px]">
          脚手架 <Tri color="#666" />
        </div>
        <div className="w-[124px] h-[26px] bg-white rounded-[3px] flex items-center justify-between pl-[4px] pr-[6px] text-[14.500px]">
          PMJSJ-1 <Tri color="#666" />
        </div>
      </div>

      {/* main */}
      <div className="h-[756px] flex">
        <LeftStrip />
        <div className="w-[6px]" />
        <SidePanels />
        <div className="w-[4px] relative bg-[#f0f0f0]">
          <div className="absolute left-0 top-[326px] w-[4px] h-[124px] bg-[#5d5d5d]" />
        </div>
        <Canvas />
      </div>

      <Dialog />
    </div>
  );
}
